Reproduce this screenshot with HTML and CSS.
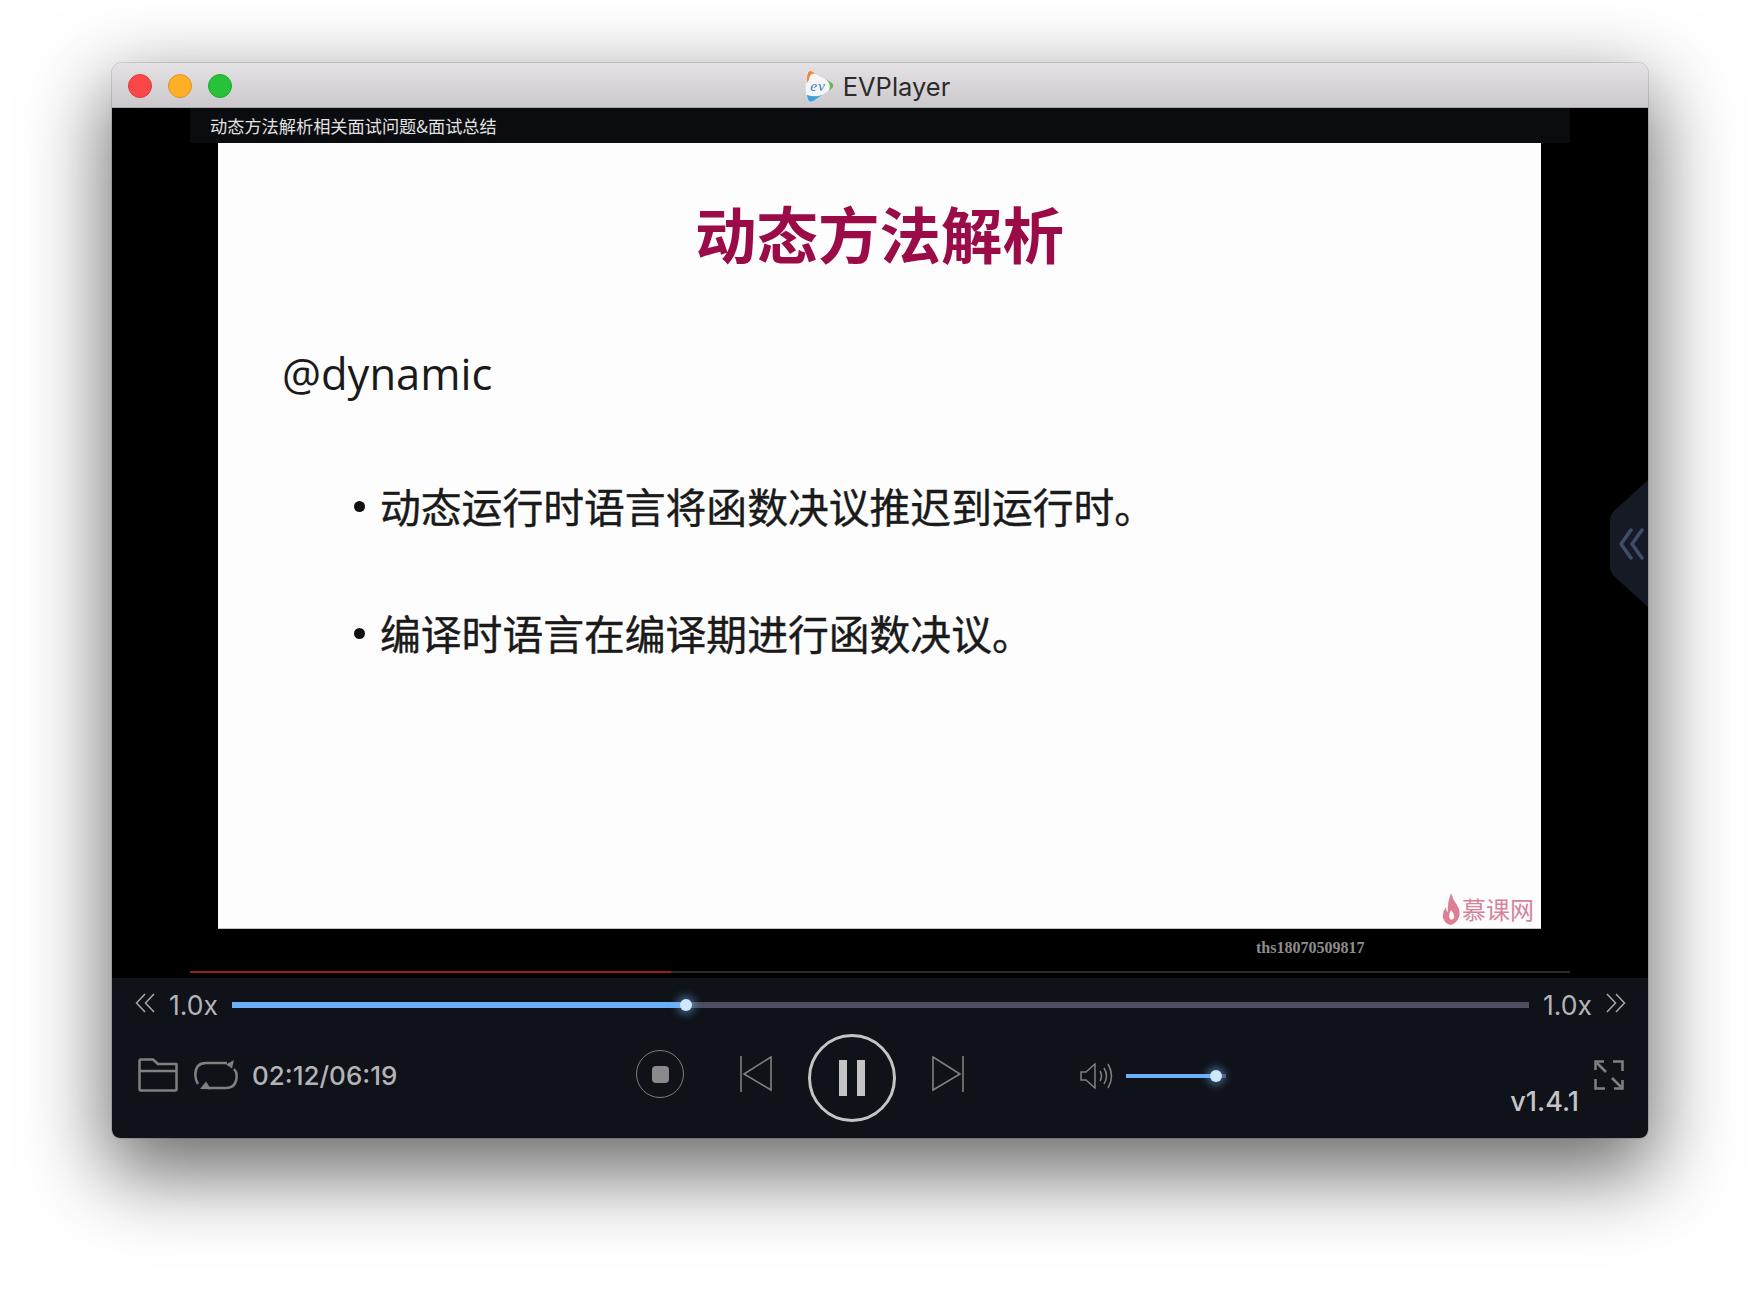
FILE: index.html
```html
<!DOCTYPE html>
<html lang="en">
<head>
  <meta charset="UTF-8">
  <title>EVPlayer</title>
  <link rel="stylesheet" href="styles.css">
</head>
<body>

  <div class="window">

    <!-- Title bar -->
    <div class="titlebar">
      <div class="lights">
        <span class="light red"></span>
        <span class="light yellow"></span>
        <span class="light green"></span>
      </div>
      <svg class="app-logo" width="31" height="33" viewBox="0 0 30 32">
        <path d="M3 4Q2 1 6 1L26 12Q30 15 27 18L9 30Q5 32 3 28Q0 16 3 4Z" fill="#f4f6f7"/>
        <path d="M2.5 13Q2.5 7 3.5 3.5Q4 0.5 7 1.2L11 3.5Q6 3.5 5.5 7Q5 10 2.5 13Z" fill="#ef8a3c"/>
        <path d="M21 8.8L26.5 12Q30 15 27 18L24 20Q27 14 21 8.8Z" fill="#69b553"/>
        <path d="M2.8 24L3.5 28Q5 32 9 30L18 24Q10 27 2.8 24Z" fill="#3ea2dc"/>
        <text x="6" y="20" class="app-logo-text">ev</text>
      </svg>
      <span class="app-name">EVPlayer</span>
    </div>

    <!-- Video -->
    <div class="video">
      <div class="caption">动态方法解析相关面试问题&amp;面试总结</div>
      <div class="slide">
        <h1>动态方法解析</h1>
        <p class="keyword">@dynamic</p>
        <ul>
          <li>动态运行时语言将函数决议推迟到运行时。</li>
          <li>编译时语言在编译期进行函数决议。</li>
        </ul>
        <div class="brand">
          <svg width="18" height="32" viewBox="0 0 18 32">
            <path d="M9 0Q11 7 15 12Q19 18 17 24Q15 30 9 32Q3 31 1 25Q0 19 4 14Q4 18 6 19Q5 10 9 0ZM9 17Q6 22 8 26Q10 28 12 25Q13 21 9 17Z" fill="#dc7f95"/>
          </svg>
          <span>慕课网</span>
        </div>
      </div>
      <div class="user-mark">ths18070509817</div>
      <div class="video-progress"><div class="video-progress-fill"></div></div>

      <div class="side-tab">
        <svg width="26" height="32" viewBox="0 0 26 32" fill="none" stroke="#3f4c6e" stroke-width="3.5" stroke-linecap="round" stroke-linejoin="round">
          <path d="M13 2L3 16L13 30"/>
          <path d="M24 2L14 16L24 30"/>
        </svg>
      </div>
    </div>

    <!-- Controls -->
    <div class="controls">
      <div class="speed-row">
        <svg class="chev" width="20" height="20" viewBox="0 0 20 20" fill="none" stroke="#a8a8a8" stroke-width="1.5">
          <path d="M10 1L1.5 10L10 19"/>
          <path d="M19 1L10.5 10L19 19"/>
        </svg>
        <span class="speed">1.0x</span>
        <div class="track">
          <div class="track-fill"></div>
          <div class="track-thumb"></div>
        </div>
        <span class="speed">1.0x</span>
        <svg class="chev" width="20" height="20" viewBox="0 0 20 20" fill="none" stroke="#a8a8a8" stroke-width="1.5">
          <path d="M1 1L9.5 10L1 19"/>
          <path d="M10 1L18.5 10L10 19"/>
        </svg>
      </div>

      <div class="button-row">
        <div class="file-group">
          <svg width="40" height="34" viewBox="0 0 40 34" fill="none" stroke="#808080" stroke-width="2.5" stroke-linejoin="round">
            <path d="M1.5 12V3Q1.5 1.5 3 1.5H15L20 6H38.5V31Q38.5 32.5 37 32.5H3Q1.5 32.5 1.5 31Z"/>
            <path d="M1.5 13H38.5"/>
          </svg>
          <svg width="44" height="30" viewBox="0 0 44 30" fill="none" stroke="#808080" stroke-width="2.5">
            <path d="M4 24Q1.3 20 1.3 15Q1.3 3 12 3H33"/>
            <path d="M40 9Q42.7 12 42.7 15Q42.7 28 32 28H14"/>
            <path d="M32 4.5L40 0L38 8.5Z" fill="#808080" stroke="none"/>
            <path d="M6 29L12 21.5L17 29.2Z" fill="#808080" stroke="none"/>
          </svg>
          <span class="time">02:12/06:19</span>
        </div>

        <div class="transport">
          <div class="stop"><span></span></div>
          <svg class="skip" width="32" height="36" viewBox="0 0 32 36" fill="none" stroke="#808080" stroke-width="1.6">
            <path d="M1 0V36"/>
            <path d="M31 1V34L4 18Z"/>
          </svg>
          <div class="pause"><span></span><span></span></div>
          <svg class="skip" width="32" height="36" viewBox="0 0 32 36" fill="none" stroke="#808080" stroke-width="1.6">
            <path d="M31 0V36"/>
            <path d="M1 1V34L28 18Z"/>
          </svg>
        </div>

        <div class="volume">
          <svg width="33" height="26" viewBox="0 0 33 26" fill="none" stroke="#808080" stroke-width="1.5">
            <path d="M1 9V17H6L15 25V1L6 9Z"/>
            <path d="M20 8Q23 13 20 18"/>
            <path d="M24 5Q29 13 24 21"/>
            <path d="M28 1Q35 13 28 25"/>
          </svg>
          <div class="volume-track">
            <div class="volume-fill"></div>
            <div class="volume-thumb"></div>
          </div>
        </div>

        <div class="right-group">
          <span class="version">v1.4.1</span>
          <svg class="fullscreen" width="30" height="30" viewBox="0 0 30 30" fill="none" stroke="#808080" stroke-width="2.5">
            <path d="M1.5 10V1.5H10"/>
            <path d="M19 1.5H28.5V11"/>
            <path d="M1.5 19V28.5H11"/>
            <path d="M28.5 20V28.5H20"/>
            <path d="M3 3L12 12"/>
            <path d="M18 18L27 27"/>
          </svg>
        </div>
      </div>
    </div>

  </div>

</body>
</html>
```

FILE: styles.css
```css
html, body {
  margin: 0;
  padding: 0;
}

body {
  width: 1760px;
  height: 1298px;
  overflow: hidden;
  background: #fff;
  font-family: Inter, "Noto Sans CJK SC", sans-serif;
}

.window {
  width: 1536px;
  height: 1075px;
  margin: 63px 0 0 112px;
  border-radius: 10px 10px 8px 8px;
  overflow: hidden;
  position: relative;
  display: flex;
  flex-direction: column;
  box-shadow: 0 30px 80px 6px rgba(0,0,0,0.58), 0 0 0 1px rgba(0,0,0,0.12);
}

/* Title bar */

.titlebar {
  height: 45px;
  flex: none;
  background: linear-gradient(#e4e2e4, #cbc9cc);
  display: flex;
  align-items: center;
  justify-content: center;
  gap: 8px;
  padding: 2px 6px 0 0;
  position: relative;
  box-sizing: border-box;
  border-bottom: 1px solid #a9a8aa;
}

.lights {
  position: absolute;
  left: 16px;
  top: 11px;
  display: flex;
  gap: 16px;
}

.light {
  width: 24px;
  height: 24px;
  border-radius: 50%;
  box-sizing: border-box;
}

.red { background: #fc4748; border: 1px solid #de3b3d; }
.yellow { background: #fdb025; border: 1px solid #df9320; }
.green { background: #27c13a; border: 1px solid #1faa2c; }

.app-logo-text {
  font-family: "Liberation Serif", serif;
  font-style: italic;
  font-size: 15px;
  letter-spacing: 1px;
  fill: #3a7fc0;
}

.app-name {
  font-size: 25.5px;
  color: #2c2a2c;
}

/* Video */

.video {
  height: 870px;
  flex: none;
  background: #000;
  position: relative;
  display: flex;
  flex-direction: column;
}

.caption {
  margin: 0 78px;
  height: 35px;
  line-height: 36px;
  padding-left: 20px;
  background: #0b0c0f;
  color: #e2e2e2;
  font-size: 17.2px;
  font-family: "Noto Sans CJK SC", sans-serif;
}

.slide {
  margin-left: 106px;
  width: 1323px;
  height: 786px;
  box-sizing: border-box;
  background: #fdfdfd;
  border-bottom: 1px solid #c4c4c4;
  position: relative;
  font-family: "Noto Sans CJK SC", sans-serif;
  color: #1a1a1a;
}

.slide h1 {
  margin: 0;
  padding-top: 45px;
  font-size: 61.5px;
  line-height: 90px;
  font-weight: 700;
  text-align: center;
  color: #9a0b48;
}

.keyword {
  margin: 66px 0 0 64px;
  font-family: "Open Sans", sans-serif;
  font-size: 43.5px;
  line-height: 60px;
}

.slide ul {
  list-style: none;
  margin: 72px 0 0 136px;
  padding: 0;
  display: flex;
  flex-direction: column;
  gap: 67px;
}

.slide li {
  font-size: 40.8px;
  line-height: 60px;
  -webkit-text-stroke: 0.4px #1a1a1a;
  display: flex;
  align-items: center;
  gap: 15px;
}

.slide li::before {
  content: "";
  width: 11px;
  height: 11px;
  border-radius: 50%;
  background: #111;
  flex: none;
}

.brand {
  position: absolute;
  right: 7px;
  bottom: 3px;
  display: flex;
  align-items: center;
  gap: 2px;
  color: #d6829b;
  font-size: 24px;
  line-height: 32px;
}

.user-mark {
  margin-left: 1144px;
  height: 38px;
  line-height: 38px;
  font-family: "Liberation Serif", serif;
  font-weight: bold;
  font-size: 16px;
  color: #8d8d8d;
}

.video-progress {
  margin: 4px 78px 0;
  height: 2px;
  background: #2c2c2e;
}

.video-progress-fill {
  width: 481px;
  height: 2px;
  background: #a01a20;
}

.side-tab {
  position: absolute;
  right: 0;
  top: 372px;
  width: 38px;
  height: 127px;
  background: #151a24;
  clip-path: polygon(100% 0, 100% 100%, 8% 75%, 0 70%, 0 30%, 8% 25%);
  display: flex;
  align-items: center;
  justify-content: flex-end;
  padding-right: 4px;
  box-sizing: border-box;
}

/* Controls */

.controls {
  flex: 1;
  background: #0f1218;
  color: #b4b4b6;
}

.speed-row {
  height: 56px;
  box-sizing: border-box;
  padding: 0 22px 2px 23px;
  display: flex;
  align-items: center;
}

.chev {
  margin-bottom: 4px;
}

.speed {
  font-size: 26.5px;
  margin: 0 14px;
  line-height: 1;
}

.track {
  flex: 1;
  height: 6px;
  background: #4a4e5e;
  position: relative;
}

.track-fill {
  width: 454px;
  height: 6px;
  background: #6cb0fa;
}

.track-thumb {
  position: absolute;
  left: 448px;
  top: -3px;
  width: 12px;
  height: 12px;
  border-radius: 50%;
  background: #cfe8ff;
  box-shadow: 0 0 8px 3px rgba(120,190,255,0.5);
}

.button-row {
  height: 88px;
  padding: 0 24px 0 26px;
  display: flex;
  align-items: center;
}

.file-group {
  width: 498px;
  flex: none;
  display: flex;
  align-items: center;
  gap: 16px;
  margin-bottom: 6px;
}

.time {
  font-size: 26px;
  font-weight: 500;
  margin-left: -2px;
  color: #b4b4b6;
}

.transport {
  display: flex;
  align-items: center;
}

.stop {
  width: 48px;
  height: 48px;
  margin: 0 56px 8px 0;
  box-sizing: border-box;
  border: 1.5px solid #7d7d7d;
  border-radius: 50%;
  display: flex;
  align-items: center;
  justify-content: center;
}

.stop span {
  width: 17px;
  height: 17px;
  border-radius: 4px;
  background: #8a8a8a;
}

.skip {
  margin-bottom: 8px;
}

.pause {
  width: 88px;
  height: 88px;
  margin: 0 36px;
  box-sizing: border-box;
  border: 3px solid #c4c4c4;
  border-radius: 50%;
  display: flex;
  align-items: center;
  justify-content: center;
  gap: 10px;
}

.pause span {
  width: 8px;
  height: 36px;
  background: #c4c4c4;
}

.volume {
  margin: 0 0 4px 116px;
  display: flex;
  align-items: center;
  gap: 13px;
}

.volume-track {
  width: 100px;
  height: 4px;
  background: #4a4e5e;
  position: relative;
}

.volume-fill {
  width: 90px;
  height: 4px;
  background: #6cb0fa;
}

.volume-thumb {
  position: absolute;
  left: 84px;
  top: -4px;
  width: 12px;
  height: 12px;
  border-radius: 50%;
  background: #cfe8ff;
  box-shadow: 0 0 8px 3px rgba(120,190,255,0.5);
}

.right-group {
  margin-left: auto;
  align-self: flex-start;
  display: flex;
  align-items: flex-start;
  gap: 15px;
}

.version {
  margin-top: 53px;
  font-size: 27px;
  line-height: 30px;
  font-weight: 500;
  color: #c4c4c6;
}

.fullscreen {
  margin-top: 26px;
}
```
